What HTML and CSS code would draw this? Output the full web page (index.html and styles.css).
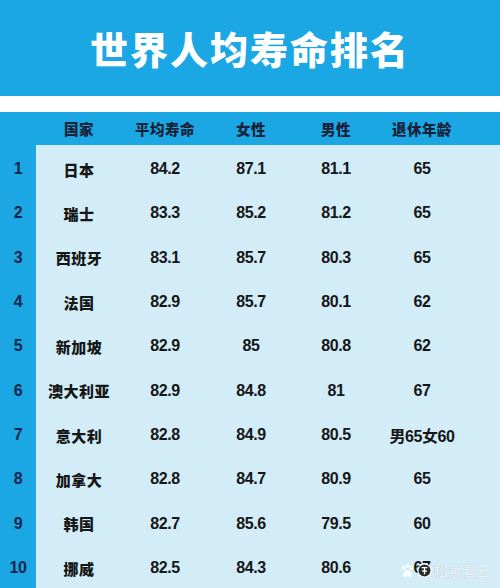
FILE: index.html
```html
<!DOCTYPE html>
<html lang="zh-CN">
<head>
    <meta charset="UTF-8">
    <meta name="viewport" content="width=device-width, initial-scale=1.0">
    <title>世界人均寿命排名</title>
    <link rel="stylesheet" href="styles.css">
</head>
<body>
    <div class="page">
        <h1 class="title">世界人均寿命排名</h1>

        <div class="table">
            <div class="row head">
                <div class="cell rank"></div>
                <div class="cell">国家</div>
                <div class="cell">平均寿命</div>
                <div class="cell">女性</div>
                <div class="cell">男性</div>
                <div class="cell">退休年龄</div>
                <div class="cell"></div>
            </div>
            <div class="rows">
                <div class="row">
                    <div class="cell rank">1</div>
                    <div class="cell name">日本</div>
                    <div class="cell">84.2</div>
                    <div class="cell">87.1</div>
                    <div class="cell">81.1</div>
                    <div class="cell">65</div>
                    <div class="cell"></div>
                </div>
                <div class="row">
                    <div class="cell rank">2</div>
                    <div class="cell name">瑞士</div>
                    <div class="cell">83.3</div>
                    <div class="cell">85.2</div>
                    <div class="cell">81.2</div>
                    <div class="cell">65</div>
                    <div class="cell"></div>
                </div>
                <div class="row">
                    <div class="cell rank">3</div>
                    <div class="cell name">西班牙</div>
                    <div class="cell">83.1</div>
                    <div class="cell">85.7</div>
                    <div class="cell">80.3</div>
                    <div class="cell">65</div>
                    <div class="cell"></div>
                </div>
                <div class="row">
                    <div class="cell rank">4</div>
                    <div class="cell name">法国</div>
                    <div class="cell">82.9</div>
                    <div class="cell">85.7</div>
                    <div class="cell">80.1</div>
                    <div class="cell">62</div>
                    <div class="cell"></div>
                </div>
                <div class="row">
                    <div class="cell rank">5</div>
                    <div class="cell name">新加坡</div>
                    <div class="cell">82.9</div>
                    <div class="cell">85</div>
                    <div class="cell">80.8</div>
                    <div class="cell">62</div>
                    <div class="cell"></div>
                </div>
                <div class="row">
                    <div class="cell rank">6</div>
                    <div class="cell name">澳大利亚</div>
                    <div class="cell">82.9</div>
                    <div class="cell">84.8</div>
                    <div class="cell">81</div>
                    <div class="cell">67</div>
                    <div class="cell"></div>
                </div>
                <div class="row">
                    <div class="cell rank">7</div>
                    <div class="cell name">意大利</div>
                    <div class="cell">82.8</div>
                    <div class="cell">84.9</div>
                    <div class="cell">80.5</div>
                    <div class="cell">男65女60</div>
                    <div class="cell"></div>
                </div>
                <div class="row">
                    <div class="cell rank">8</div>
                    <div class="cell name">加拿大</div>
                    <div class="cell">82.8</div>
                    <div class="cell">84.7</div>
                    <div class="cell">80.9</div>
                    <div class="cell">65</div>
                    <div class="cell"></div>
                </div>
                <div class="row">
                    <div class="cell rank">9</div>
                    <div class="cell name">韩国</div>
                    <div class="cell">82.7</div>
                    <div class="cell">85.6</div>
                    <div class="cell">79.5</div>
                    <div class="cell">60</div>
                    <div class="cell"></div>
                </div>
                <div class="row">
                    <div class="cell rank">10</div>
                    <div class="cell name">挪威</div>
                    <div class="cell">82.5</div>
                    <div class="cell">84.3</div>
                    <div class="cell">80.6</div>
                    <div class="cell">67</div>
                    <div class="cell"></div>
                </div>
            </div>
        </div>

        <!-- watermark -->
        <div class="watermark">
            <svg width="15" height="15" viewBox="0 0 16 16">
                <ellipse cx="4" cy="5" rx="1.8" ry="2.4" />
                <ellipse cx="8" cy="3" rx="1.8" ry="2.4" />
                <ellipse cx="12" cy="5" rx="1.8" ry="2.4" />
                <path d="M8 7.5c-2.6 0-5 3.6-5 5.6 0 1.6 1.6 1.9 2.6 1.6 1-.3 1.6-.5 2.4-.5s1.4.2 2.4.5c1 .3 2.6 0 2.6-1.6 0-2-2.4-5.6-5-5.6z" />
            </svg>
            <svg width="15" height="15" viewBox="0 0 16 16">
                <circle cx="8" cy="8" r="7" class="ring" />
                <path d="M5 5h6M8 5v7M5.5 8.5h5" class="mark" />
            </svg>
            <span>松泉看云</span>
        </div>
    </div>
</body>
</html>
```

FILE: styles.css
```css
body {
    margin: 0;
    background-color: #ffffff;
    font-family: "Liberation Sans", "Noto Sans CJK SC", sans-serif;
}
.page {
    position: relative;
    width: 500px;
    height: 588px;
    overflow: hidden;
}
.title {
    margin: 0;
    height: 96px;
    background-color: #1aa7e3;
    color: #ffffff;
    font-family: "Noto Sans CJK SC", sans-serif;
    font-size: 38px;
    font-weight: 900;
    letter-spacing: 2px;
    display: flex;
    align-items: center;
    justify-content: center;
    padding-bottom: 2px;
    box-sizing: border-box;
}
.table {
    margin-top: 16px;
    background-color: #d3edf8;
}
.row {
    display: grid;
    grid-template-columns: 36px 86px 86px 86px 84px 88px 1fr;
    height: 44.33px;
}
.rows {
    padding-top: 2px;
    background: linear-gradient(to right, #1aa7e3 36px, #d3edf8 36px);
}
.cell {
    display: flex;
    align-items: center;
    justify-content: center;
    font-size: 16px;
    font-weight: bold;
    color: #161616;
    letter-spacing: -0.4px;
}
.name {
    font-family: "Noto Sans CJK SC", sans-serif;
    font-size: 15px;
    font-weight: 900;
    letter-spacing: 0.5px;
}
.rank {
    background-color: #1aa7e3;
    color: #14264a;
}
.head {
    height: 33px;
    background-color: #1aa7e3;
}
.head .cell {
    font-family: "Noto Sans CJK SC", sans-serif;
    font-size: 14.5px;
    font-weight: 900;
    color: #1b2238;
    letter-spacing: 0.5px;
}
.watermark {
    position: absolute;
    left: 400px;
    top: 560px;
    display: flex;
    align-items: center;
    gap: 2px;
    color: rgba(255, 255, 255, 0.85);
    font-family: "Noto Sans CJK SC", sans-serif;
    font-size: 14px;
    text-shadow: 0 0 1px rgba(0, 0, 0, 0.25);
}
.watermark svg {
    fill: rgba(255, 255, 255, 0.85);
}
.watermark .ring {
    fill: #2a2a2a;
    stroke: #ffffff;
    stroke-width: 1.2;
}
.watermark .mark {
    fill: none;
    stroke: #ffffff;
    stroke-width: 1.4;
}
```
